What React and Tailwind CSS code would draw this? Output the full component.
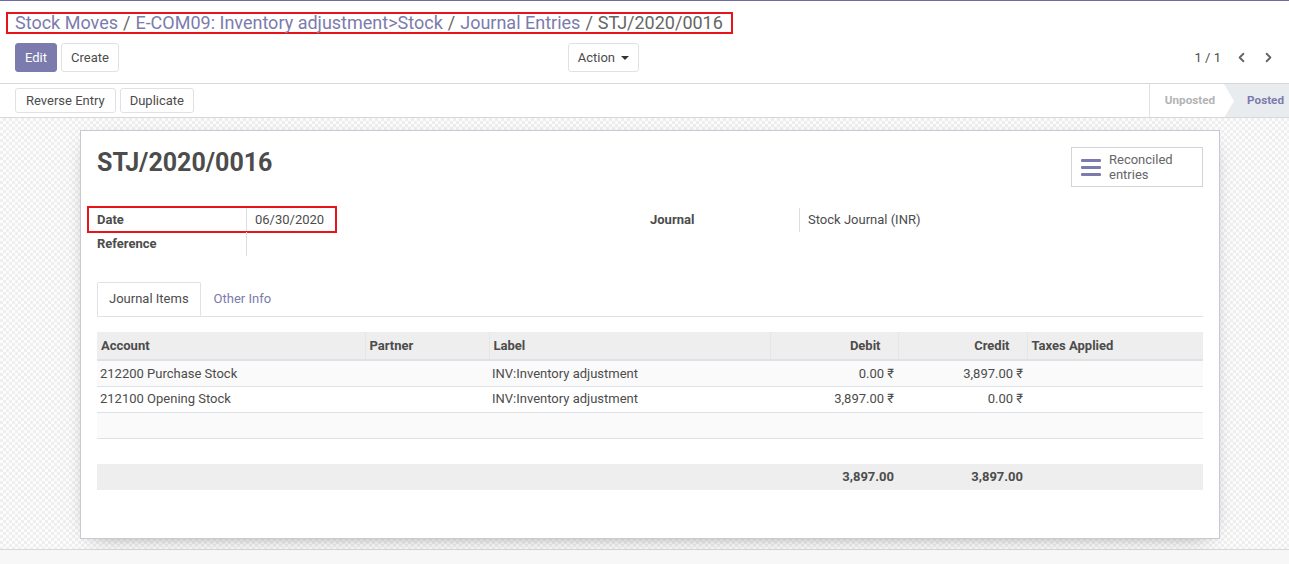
import { ChevronLeft, ChevronRight } from "lucide-react";

const lines = [
  { account: "212200 Purchase Stock", partner: "", label: "INV:Inventory adjustment", debit: "0.00 ₹", credit: "3,897.00 ₹" },
  { account: "212100 Opening Stock", partner: "", label: "INV:Inventory adjustment", debit: "3,897.00 ₹", credit: "0.00 ₹" },
];

function Btn({ children, primary, className = "" }) {
  return (
    <button
      className={`rounded-[3px] border text-[13px] leading-none ${
        primary ? "border-[#7c7bad] bg-[#7c7bad] text-white" : "border-[#dee2e6] bg-white text-[#4c4c4c]"
      } ${className}`}
    >
      {children}
    </button>
  );
}

function Field({ label, value, boxed }) {
  return (
    <div className="relative flex h-[24px] items-center">
      {boxed && <div className="pointer-events-none absolute -left-[10px] -top-[2px] h-[27px] w-[250px] border-2 border-[#e8141a]" />}
      <div className="flex h-full w-[150px] items-center border-r border-[#dcdcdc] text-[13px] font-bold text-[#4c4c4c]">{label}</div>
      <div className="pl-[8px] text-[13px] text-[#4c4c4c]">{value}</div>
    </div>
  );
}

export default function App() {
  return (
    <div className="flex h-[564px] flex-col overflow-hidden bg-white font-['Roboto','Noto_Sans',sans-serif] text-[#4c4c4c]">
      {/* control panel */}
      <div className="flex border-t border-[#6c6a9e] px-[6px] pt-[11px]">
        <div className="flex h-[22px] items-center border-2 border-[#e8141a] pl-[7px] pr-[8px] text-[18px] leading-[18px]">
          <span className="text-[#7c7bad]">Stock Moves</span>
          <span className="px-[5px] text-[#666]">/</span>
          <span className="text-[#7c7bad]">E-COM09: Inventory adjustment&gt;Stock</span>
          <span className="px-[5px] text-[#666]">/</span>
          <span className="text-[#7c7bad]">Journal Entries</span>
          <span className="px-[5px] text-[#666]">/</span>
          <span className="text-[#666]">STJ/2020/0016</span>
        </div>
      </div>

      <div className="flex items-center border-b border-[#d8d8d8] pb-[11px] pl-[15px] pr-[13px] pt-[9px]">
        <div className="flex w-[624px] items-center justify-between">
          <div className="flex gap-[4px]">
            <Btn primary className="h-[29px] px-[9px]">Edit</Btn>
            <Btn className="h-[29px] px-[9px]">Create</Btn>
          </div>
          <Btn className="flex h-[29px] items-center gap-[6px] px-[9px]">
            Action
            <span className="h-0 w-0 border-x-[4px] border-t-[4px] border-x-transparent border-t-[#333]" />
          </Btn>
        </div>
        <div className="ml-auto flex items-center text-[13px] text-[#4c4c4c]">
          <span className="mr-[13px]">1 / 1</span>
          <ChevronLeft size={15} strokeWidth={3} className="mr-[12px] text-[#666]" />
          <ChevronRight size={15} strokeWidth={3} className="text-[#666]" />
        </div>
      </div>

      <div className="flex h-[34px] items-stretch border-b border-[#d8d8d8] pl-[15px]">
        <div className="flex items-center gap-[4px]">
          <Btn className="h-[25px] px-[10px]">Reverse Entry</Btn>
          <Btn className="h-[25px] px-[9px]">Duplicate</Btn>
        </div>
        <div className="ml-auto flex items-stretch border-l border-[#dee2e6] text-[11.7px] font-bold">
          <div className="flex items-center pl-[15px] pr-[9px] text-[#b3b3b3]">Unposted</div>
          <div className="relative flex items-center overflow-hidden bg-[#e9ecef] pl-[23px] pr-[5px] text-[#7c7bad]">
            <span className="absolute left-0 top-0 h-0 w-0 border-y-[17px] border-l-[10px] border-y-transparent border-l-white" />
            Posted
          </div>
        </div>
      </div>

      {/* content */}
      <div className="flex-1 border-b border-[#d8d8d8] bg-[repeating-conic-gradient(#efefef_0_25%,#fcfcfc_0_50%)] bg-size-[6px_6px] px-[80px] pt-[12px]">
        <div className="w-[1140px] border border-[#c9c8d3] bg-white px-[16px] pb-[48px] pt-[16px] shadow-[0_5px_20px_-12px_rgba(0,0,0,0.6)]">
          <div className="flex items-start justify-between">
            <h1 className="text-[25px] font-bold leading-[32px] text-[#4c4c4c]">STJ/2020/0016</h1>
            <button className="flex h-[40px] w-[132px] items-center border border-[#d4d4d4] bg-white px-[9px] text-left">
              <span className="mr-[8px] flex w-[20px] flex-col gap-[4px]">
                <span className="h-[3px] rounded-[1px] bg-[#7c7bad]" />
                <span className="h-[3px] rounded-[1px] bg-[#7c7bad]" />
                <span className="h-[3px] rounded-[1px] bg-[#7c7bad]" />
              </span>
              <span className="text-[13px] leading-[15px] text-[#666]">Reconciled<br />entries</span>
            </button>
          </div>

          <div className="mt-[21px] grid grid-cols-2">
            <div>
              <Field label="Date" value="06/30/2020" boxed />
              <Field label="Reference" value="" />
            </div>
            <div>
              <Field label="Journal" value="Stock Journal (INR)" />
            </div>
          </div>

          <div className="mt-[26px] flex border-b border-[#dee2e6] text-[13px]">
            <div className="-mb-px flex h-[34px] items-center rounded-t-[2px] border border-b-white border-[#dee2e6] bg-white px-[11px] text-[#4c4c4c]">Journal Items</div>
            <div className="flex h-[34px] items-center px-[13px] text-[#7c7bad]">Other Info</div>
          </div>

          <table className="mt-[15px] w-full table-fixed border-collapse text-[13px]">
            <colgroup>
              <col className="w-[268px]" />
              <col className="w-[124px]" />
              <col className="w-[281px]" />
              <col className="w-[128px]" />
              <col className="w-[129px]" />
              <col />
            </colgroup>
            <thead>
              <tr className="h-[28px] border-b-2 border-[#dee2e6] bg-[#eeeeee] font-bold text-[#4c4c4c]">
                <th className="px-[4px] text-left">Account</th>
                <th className="border-l border-[#e6e6e6] px-[4px] text-left">Partner</th>
                <th className="border-l border-[#e6e6e6] px-[4px] text-left">Label</th>
                <th className="border-l border-[#e6e6e6] pr-[17px] text-right">Debit</th>
                <th className="border-l border-[#e6e6e6] pr-[17px] text-right">Credit</th>
                <th className="border-l border-[#e6e6e6] px-[4px] text-left">Taxes Applied</th>
              </tr>
            </thead>
            <tbody>
              {lines.map((l, i) => (
                <tr key={i} className={`h-[26px] border-b border-[#dee2e6] ${i % 2 === 0 ? "bg-[#fafafa]" : "bg-white"}`}>
                  <td className="px-[3px]">{l.account}</td>
                  <td className="px-[3px]">{l.partner}</td>
                  <td className="px-[3px]">{l.label}</td>
                  <td className="pr-[4px] text-right">{l.debit}</td>
                  <td className="pr-[4px] text-right">{l.credit}</td>
                  <td />
                </tr>
              ))}
              <tr className="h-[26px] border-b border-[#dee2e6] bg-[#fafafa]"><td colSpan={6} /></tr>
              <tr className="h-[26px] bg-white"><td colSpan={6} /></tr>
              <tr className="h-[26px] bg-[#eeeeee] font-bold">
                <td />
                <td />
                <td />
                <td className="pr-[4px] text-right">3,897.00</td>
                <td className="pr-[4px] text-right">3,897.00</td>
                <td />
              </tr>
            </tbody>
          </table>
        </div>
      </div>
      <div className="h-[14px] bg-[#f7f7f7]" />
    </div>
  );
}
